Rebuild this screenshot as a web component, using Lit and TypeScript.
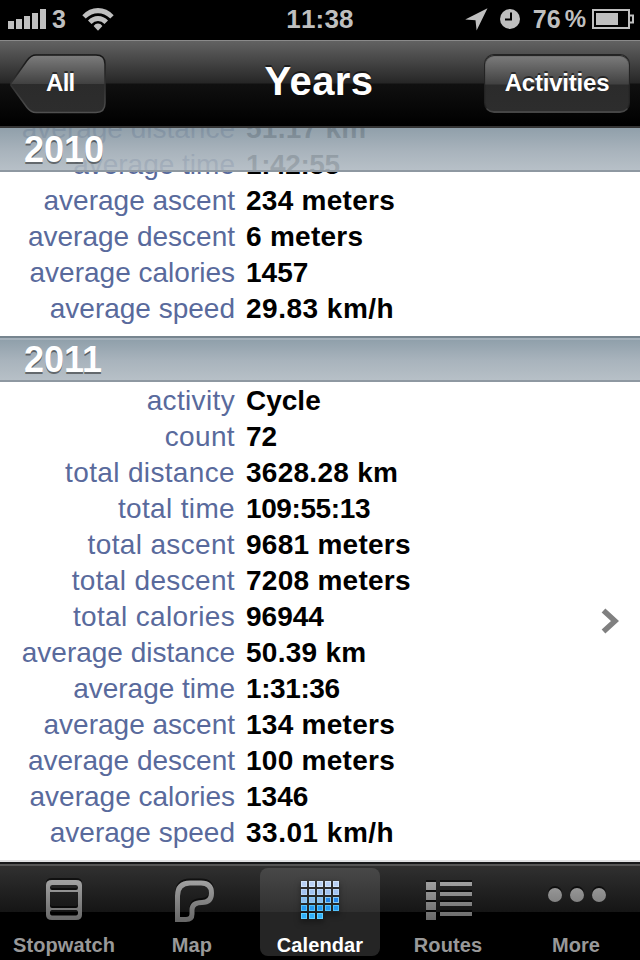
import { LitElement, html, css, svg } from 'lit';
import { customElement, property } from 'lit/decorators.js';
import { classMap } from 'lit/directives/class-map.js';

type Row = [label: string, value: string];

const YEAR_2010: Row[] = [
  ['average distance', '51.17 km'],
  ['average time', '1:42:55'],
  ['average ascent', '234 meters'],
  ['average descent', '6 meters'],
  ['average calories', '1457'],
  ['average speed', '29.83 km/h'],
];

const YEAR_2011: Row[] = [
  ['activity', 'Cycle'],
  ['count', '72'],
  ['total distance', '3628.28 km'],
  ['total time', '109:55:13'],
  ['total ascent', '9681 meters'],
  ['total descent', '7208 meters'],
  ['total calories', '96944'],
  ['average distance', '50.39 km'],
  ['average time', '1:31:36'],
  ['average ascent', '134 meters'],
  ['average descent', '100 meters'],
  ['average calories', '1346'],
  ['average speed', '33.01 km/h'],
];

@customElement('status-bar')
class StatusBar extends LitElement {
  static styles = css`
    :host {
      display: grid;
      grid-template-columns: 1fr auto 1fr;
      align-items: center;
      box-sizing: border-box;
      height: 40px;
      padding-bottom: 2px;
      background: #000;
      color: #bfbfbf;
      font: bold 25px/38px 'Liberation Sans', Arial, sans-serif;
    }

    .left,
    .right {
      display: flex;
      align-items: center;
    }

    .left {
      padding-left: 8px;
    }

    .right {
      justify-content: flex-end;
      padding-right: 6px;
    }

    svg {
      display: block;
      fill: #bfbfbf;
    }

    .carrier {
      margin: 0 16px 0 6px;
    }

    .time {
      font-size: 26px;
      letter-spacing: 0.2px;
      font-kerning: none;
    }

    .clock {
      margin: 0 13px 0 12px;
    }

    .percent {
      margin: 0 6px 0 4px;
      font-size: 24px;
    }
  `;

  render() {
    return html`
      <div class="left">
        <svg width="38" height="20" viewBox="0 0 38 20">
          <path d="M0 12h6v8H0zM8 10h6v10H8zM16 7h6v13h-6zM24 4h6v16h-6zM32 0h6v20h-6z" />
        </svg>
        <span class="carrier">3</span>
        <svg width="32" height="24" viewBox="0 0 32 24">
          <path d="M0.3 8.2Q7 1 16 1t15.700 7.200l-3.400 3.300Q22.500 6.200 16 6.200T3.700 11.500z" />
          <path d="M6 13.600Q10.200 9 16 9t10 4.600l-3.500 3.400Q19.800 14 16 14t-6.500 3z" />
          <path d="M11.600 19Q13.500 16.600 16 16.600t4.400 2.400L16 23.800z" />
        </svg>
      </div>
      <span class="time">11:38</span>
      <div class="right">
        <svg width="23" height="23" viewBox="0 0 23 23">
          <path d="M22.500.3L11.600 22.500 10.500 12.300.2 11.500z" />
        </svg>
        <svg class="clock" width="20" height="20" viewBox="0 0 20 20">
          <circle cx="10" cy="10" r="10" />
          <path d="M11 3.500V10.500H5" fill="none" stroke="#000" stroke-width="2" />
        </svg>
        <span>76</span>
        <span class="percent">%</span>
        <svg width="42" height="20" viewBox="0 0 42 20">
          <path
            d="M1 1h36v5.500h4v7h-4V19H1z M37 6.500v7"
            fill="none"
            stroke="#bfbfbf"
            stroke-width="2"
          />
          <path d="M4 4h22v12H4z" />
        </svg>
      </div>
    `;
  }
}

@customElement('nav-bar')
class NavBar extends LitElement {
  static styles = css`
    :host {
      display: grid;
      grid-template-columns: 146px 1fr 146px;
      align-items: center;
      box-sizing: border-box;
      height: 88px;
      padding: 0 10px;
      border-top: 1px solid #8a8a8a;
      border-bottom: 2px solid #343434;
      background: linear-gradient(#626262, #262626 42px, #101010 43px, #000 84px);
      color: #fff;
      font-family: 'Liberation Sans', Arial, sans-serif;
      font-weight: bold;
      text-shadow: 0 -2px 0 rgba(0, 0, 0, 0.5);
    }

    .back {
      display: grid;
      width: 96px;
      height: 60px;
    }

    .back > * {
      grid-area: 1 / 1;
    }

    .back span {
      align-self: center;
      padding-left: 36px;
      font-size: 24px;
      letter-spacing: -0.7px;
      line-height: 28px;
      margin-top: -2px;
    }

    h1 {
      margin: -6px 2px 0 0;
      font-size: 40px;
      letter-spacing: 0.4px;
      line-height: 46px;
      text-align: center;
    }

    .button {
      box-sizing: border-box;
      height: 59px;
      border: 1px solid #232323;
      border-bottom: 2px solid #464646;
      border-radius: 10px;
      background: linear-gradient(#7d7d7d, #414141 29px, #2b2b2b 30px, #2d2d2d);
      box-shadow: inset 0 1px 1px #1c1c1c;
      font-size: 24px;
      letter-spacing: -0.2px;
      line-height: 55px;
      text-align: center;
    }
  `;

  render() {
    return html`
      <div class="back">
        <svg width="96" height="60" viewBox="0 0 96 60">
          <defs>
            <linearGradient id="face" x2="0" y2="1">
              <stop offset="0" stop-color="#7d7d7d" />
              <stop offset="0.5" stop-color="#414141" />
              <stop offset="0.5" stop-color="#2b2b2b" />
              <stop offset="1" stop-color="#2d2d2d" />
            </linearGradient>
            <linearGradient id="edge" x2="0" y2="1">
              <stop offset="0" stop-color="#151515" />
              <stop offset="0.5" stop-color="#303030" />
              <stop offset="1" stop-color="#505050" />
            </linearGradient>
          </defs>
          <path
            d="M26 1H86Q95 1 95 10V49Q95 58.500 86 58.500H26Q21 58.500 17 53.500L1 31.500V29L17 6.500Q21 1 26 1z"
            fill="url(#face)"
            stroke="url(#edge)"
            stroke-width="1.500"
          />
        </svg>
        <span>All</span>
      </div>
      <h1>Years</h1>
      <div class="button">Activities</div>
    `;
  }
}

@customElement('year-section')
class YearSection extends LitElement {
  @property() year = '';
  @property({ attribute: false }) rows: Row[] = [];
  @property({ type: Boolean, reflect: true }) pinned = false;
  @property({ type: Boolean }) disclosure = false;

  static styles = css`
    :host {
      display: flow-root;
      position: relative;
      font-family: 'Liberation Sans', Arial, sans-serif;
    }

    h2 {
      box-sizing: border-box;
      height: 46px;
      margin: 0;
      padding-left: 24px;
      border-top: 2px solid #77858f;
      border-bottom: 2px solid #8e98a1;
      background: linear-gradient(#a5b1bb 2px, #90a0ab 2px, #a8b3bc 22px, #b7c0c7);
      color: #fff;
      font-size: 36px;
      line-height: 44px;
      text-shadow: 0 2px 0 rgba(0, 0, 0, 0.45);
    }

    /* the pinned header floats over the rows scrolling beneath it */
    :host([pinned]) h2 {
      position: absolute;
      inset: 0 0 auto;
      height: 44px;
      border-top: 0;
      z-index: 1;
      background: none;
    }

    :host([pinned]) h2::before {
      content: '';
      position: absolute;
      inset: 0;
      z-index: -1;
      background: linear-gradient(#8495a1, #9eaab4 22px, #afb9c1);
      opacity: 0.9;
    }

    .body {
      display: flex;
      align-items: center;
      justify-content: space-between;
      padding: 1px 21px 9px 0;
    }

    :host([pinned]) .body {
      margin-top: -18px;
    }

    .body svg {
      margin-top: 8px;
    }

    dl {
      display: grid;
      grid-template-columns: 235px 1fr;
      column-gap: 11px;
      margin: 0;
      font-size: 28px;
      line-height: 36px;
      white-space: nowrap;
    }

    dt {
      color: #596a9c;
      text-align: right;
    }

    dt.wide {
      letter-spacing: 0.35px;
    }

    dd {
      margin: 0;
      color: #000;
      font-weight: bold;
    }

    dd.distance,
    dd.height {
      letter-spacing: 0.27px;
    }

    dd.speed {
      letter-spacing: 0.5px;
    }

    dd.time {
      letter-spacing: -0.4px;
    }
  `;

  private renderRow([label, value]: Row) {
    const kinds = {
      distance: value.endsWith('km'),
      height: value.endsWith('meters'),
      speed: value.endsWith('km/h'),
      time: value.includes(':'),
    };
    return html`
      <dt class=${classMap({ wide: !label.startsWith('average') })}>${label}</dt>
      <dd class=${classMap(kinds)}>${value}</dd>
    `;
  }

  render() {
    return html`
      <h2>${this.year}</h2>
      <div class="body">
        <dl>${this.rows.map((row) => this.renderRow(row))}</dl>
        ${this.disclosure
          ? html`
              <svg width="18" height="26" viewBox="0 0 18 26">
                <path d="M2.500 2.500L14 13 2.500 23.500" fill="none" stroke="#808080" stroke-width="5.500" />
              </svg>
            `
          : ''}
      </div>
    `;
  }
}

@customElement('tab-bar')
class TabBar extends LitElement {
  static styles = css`
    :host {
      display: flex;
      justify-content: space-between;
      box-sizing: border-box;
      height: 98px;
      padding: 4px 4px 4px;
      border-top: 2px solid #17181a;
      background: linear-gradient(#555 2px, #303030 2px, #151515 48px, #000 48px);
      font: bold 20px/24px 'Liberation Sans', Arial, sans-serif;
      letter-spacing: 0.1px;
    }

    .tab {
      display: flex;
      flex-direction: column;
      align-items: center;
      width: 120px;
      height: 88px;
      border-radius: 8px;
      color: #999;
    }

    .tab.active {
      background: linear-gradient(#484848, #303030 44px, #252525 44px);
      color: #fff;
    }

    svg {
      display: block;
      flex: none;
      overflow: visible;
      filter: drop-shadow(0 -2px 0 rgba(0, 0, 0, 0.6));
    }

    .active svg {
      filter: drop-shadow(0 3px 3px rgba(0, 0, 0, 0.5));
    }
  `;

  private grey = svg`
    <defs>
      <linearGradient id="g" gradientUnits="userSpaceOnUse" x1="0" y1="12" x2="0" y2="54">
        <stop offset="0" stop-color="#a2a2a2" />
        <stop offset="1" stop-color="#666" />
      </linearGradient>
    </defs>
  `;

  private tabs = [
    {
      label: 'Stopwatch',
      icon: svg`
        <path
          fill="url(#g)" fill-rule="evenodd"
          d="M48 12H72Q78 12 78 17V47Q78 52 72 52H48Q42 52 42 47V17Q42 12 48 12z
             M48 17Q46 17 46 19.500T48 22H72Q74 22 74 19.500T72 17z
             M46 24V38Q46 40 48 40H72Q74 40 74 38V24z
             M48 42Q46 42 46 44.750T48 47.500H72Q74 47.500 74 44.750T72 42z"
        />
      `,
    },
    {
      label: 'Map',
      icon: svg`
        <path
          d="M45.500 51.500V28Q45.500 15 58 15H69Q79.500 15 79.500 25Q79.500 34.500 70 34.500Q60 34.500 60 42V46Q60 51.500 54 51.500Z"
          fill="none" stroke="url(#g)" stroke-width="5"
        />
      `,
    },
    {
      label: 'Calendar',
      icon: svg`
        ${Array.from({ length: 23 }, (_, i) => {
          const col = i % 5;
          const row = Math.floor(i / 5);
          const glossy = row < 2 || (row === 2 && col < 3);
          const fill = glossy
            ? ['#b9d0f4', '#a3c3f1', '#8ebaec'][row]
            : ['', '', '#2485e8', '#2799f2', '#32b0fa'][row];
          const rim = ['#d3e5fa', '#bcd6f7', '#8accf8', '#55c2fb', '#60d0ff'][row];
          return svg`
            <rect
              x=${41.5 + col * 8} y=${13.5 + row * 8}
              width="5" height="5" fill=${fill} stroke=${rim}
            />
          `;
        })}
      `,
    },
    {
      label: 'Routes',
      icon: svg`
        <path
          d="M38 14h10v8H38zM38 24h10v8H38zM38 34h10v8H38zM38 44h10v8H38zM52 14h32v4H52zM52 24h32v4H52zM52 34h32v4H52zM52 44h32v4H52z"
          fill="url(#g)"
        />
      `,
    },
    {
      label: 'More',
      icon: svg`
        <g fill="url(#g)">
          <circle cx="39" cy="27" r="7" />
          <circle cx="61" cy="27" r="7" />
          <circle cx="83" cy="27" r="7" />
        </g>
      `,
    },
  ];

  render() {
    return this.tabs.map(({ label, icon }) => html`
      <div class=${classMap({ tab: true, active: label === 'Calendar' })}>
        <svg width="120" height="65" viewBox="0 0 120 65">${this.grey}${icon}</svg>
        <span>${label}</span>
      </div>
    `);
  }
}

@customElement('app-root')
class AppRoot extends LitElement {
  static styles = css`
    :host {
      display: flex;
      flex-direction: column;
      width: 640px;
      height: 960px;
      overflow: hidden;
      background: #000;
    }

    main {
      flex: 1;
      overflow: hidden;
      background: #fff;
      border-bottom: 2px solid #dfe0e2;
    }
  `;

  render() {
    return html`
      <status-bar></status-bar>
      <nav-bar></nav-bar>
      <main>
        <year-section pinned year="2010" .rows=${YEAR_2010}></year-section>
        <year-section disclosure year="2011" .rows=${YEAR_2011}></year-section>
      </main>
      <tab-bar></tab-bar>
    `;
  }
}
